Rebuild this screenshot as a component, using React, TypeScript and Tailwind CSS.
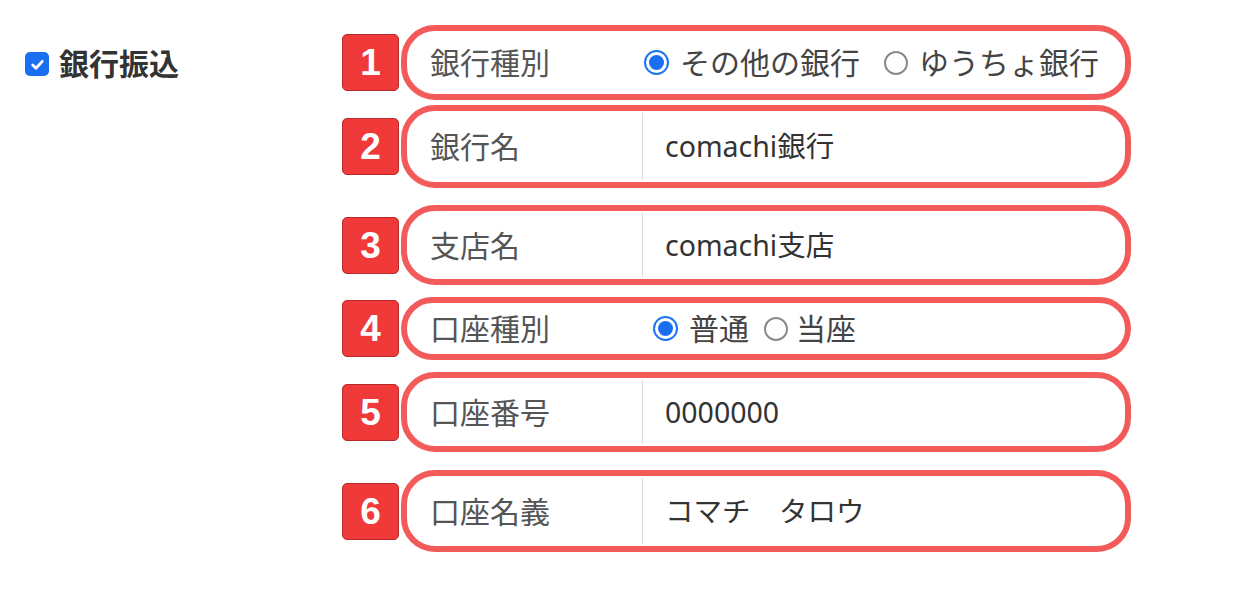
const FONT = '"Noto Sans", "Noto Sans CJK JP", sans-serif';

function Badge({ n }: { n: number }) {
  return (
    <div
      className="flex h-[57px] w-[57px] shrink-0 items-center justify-center rounded-[5px] border border-[#b82a2a] bg-[#f03a3a] text-[37px] font-bold leading-none text-white"
      style={{ fontFamily: '"Liberation Sans", Arial, sans-serif' }}
    >
      {n}
    </div>
  );
}

function Radio({ checked }: { checked?: boolean }) {
  if (checked) {
    return (
      <span className="flex h-[25px] w-[25px] shrink-0 items-center justify-center rounded-full border-2 border-[#1a73f0] bg-white">
        <span className="h-[15px] w-[15px] rounded-full bg-[#1a6ff0]" />
      </span>
    );
  }
  return <span className="block h-[24px] w-[24px] shrink-0 rounded-full border-2 border-[#8a8a8a] bg-white" />;
}

function Row({
  n,
  label,
  h,
  mt,
  children,
}: {
  n: number;
  label: string;
  h: string;
  mt: string;
  children: React.ReactNode;
}) {
  return (
    <div className={`flex items-center gap-[2px] ${mt}`}>
      <Badge n={n} />
      <div className={`flex w-[730px] items-stretch rounded-[34px] border-[6px] border-[#f35b5a] bg-white ${h}`}>
        <div className="flex w-[235px] shrink-0 items-center pl-[23px] text-[30px] text-[#555]">{label}</div>
        {children}
      </div>
    </div>
  );
}

function InputCell({ value }: { value: string }) {
  return (
    <div className="my-[2px] flex flex-1 items-center border-l border-[#dcdcdc] pl-[22px] text-[28.5px] text-[#333]">
      {value}
    </div>
  );
}

export default function App() {
  return (
    <div className="flex min-h-[593px] w-[1249px] bg-white pt-[25px]" style={{ fontFamily: FONT }}>
      <div className="w-[342px] shrink-0 pl-[25px] pt-[24px]">
        <label className="flex items-center gap-[10px]">
          <span className="flex h-[24px] w-[24px] items-center justify-center rounded-[5px] bg-[#1a6ff0]">
            <svg viewBox="0 0 16 16" className="h-[17px] w-[17px]" fill="none" stroke="white" strokeWidth={2.6} strokeLinecap="round" strokeLinejoin="round">
              <path d="M3.5 8.5l3 3 6-6.5" />
            </svg>
          </span>
          <span className="text-[30px] font-bold leading-none text-[#333]">銀行振込</span>
        </label>
      </div>

      <div className="flex flex-col">
        <Row n={1} label="銀行種別" h="h-[75px]" mt="mt-0">
          <div className="flex flex-1 items-center pl-[2px] text-[30px] text-[#444]">
            <Radio checked />
            <span className="ml-[11px]">その他の銀行</span>
            <span className="ml-[24px]"><Radio /></span>
            <span className="ml-[11px]">ゆうちょ銀行</span>
          </div>
        </Row>
        <Row n={2} label="銀行名" h="h-[83px]" mt="mt-[5px]">
          <InputCell value="comachi銀行" />
        </Row>
        <Row n={3} label="支店名" h="h-[80px]" mt="mt-[17px]">
          <InputCell value="comachi支店" />
        </Row>
        <Row n={4} label="口座種別" h="h-[63px]" mt="mt-[12px]">
          <div className="flex flex-1 items-center pl-[11px] text-[30px] text-[#444]">
            <Radio checked />
            <span className="ml-[11px]">普通</span>
            <span className="ml-[15px]"><Radio /></span>
            <span className="ml-[8px]">当座</span>
          </div>
        </Row>
        <Row n={5} label="口座番号" h="h-[80px]" mt="mt-[12px]">
          <InputCell value="0000000" />
        </Row>
        <Row n={6} label="口座名義" h="h-[82px]" mt="mt-[18px]">
          <InputCell value="コマチ　タロウ" />
        </Row>
      </div>
    </div>
  );
}
